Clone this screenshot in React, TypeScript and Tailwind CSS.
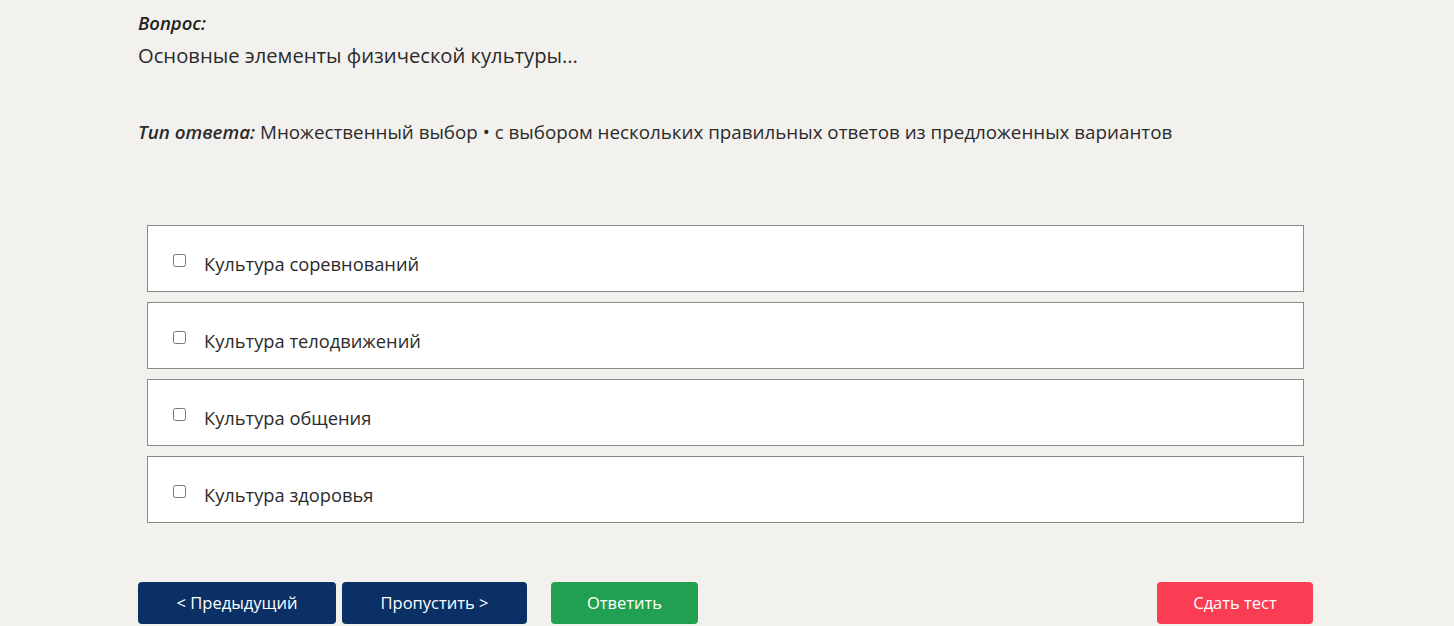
const options = [
    'Культура соревнований',
    'Культура телодвижений',
    'Культура общения',
    'Культура здоровья',
];

export default function App() {
    return (
        <div className="min-h-[626px] bg-[#f3f1ee] text-[#222] font-['Open_Sans',sans-serif]">
            <div className="ml-[138px] w-[1175px]">
                <p className="pt-[10px] text-[18.5px] leading-[25px] font-semibold italic">Вопрос:</p>
                <p className="mt-[7px] text-[20.2px] leading-[27px] text-[#2b2b2b]">Основные элементы физической культуры...</p>

                <p className="mt-[50px] text-[18.8px] leading-[26px] text-[#2b2b2b]">
                    <span className="font-semibold italic">Тип ответа:</span> Множественный выбор • с выбором нескольких правильных ответов из предложенных вариантов
                </p>

                <div className="mt-[80px] mx-[9px] flex flex-col gap-[10px]">
                    {options.map(opt => (
                        <label
                            key={opt}
                            className="flex h-[67px] items-start border border-[#8a8a8a] bg-white pl-[25px] pt-[26px]"
                        >
                            <input type="checkbox" className="mt-[2px] h-[13px] w-[13px] accent-[#555]" />
                            <span className="ml-[18px] text-[18.3px] leading-[23px] text-[#2b2b2b]">{opt}</span>
                        </label>
                    ))}
                </div>

                <div className="mt-[59px] flex items-center text-[16.5px] text-white">
                    <button className="h-[42px] w-[198px] rounded-[4px] bg-[#0a3066]">&lt; Предыдущий</button>
                    <button className="ml-[6px] h-[42px] w-[185px] rounded-[4px] bg-[#0a3066]">Пропустить &gt;</button>
                    <button className="ml-[24px] h-[42px] w-[147px] rounded-[4px] bg-[#22a052]">Ответить</button>
                    <button className="ml-auto h-[42px] w-[156px] rounded-[4px] bg-[#fa3d52]">Сдать тест</button>
                </div>
            </div>
        </div>
    );
}
